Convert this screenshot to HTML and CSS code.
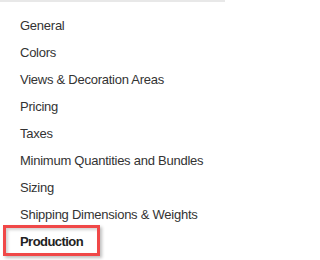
FILE: index.html
```html
<!DOCTYPE html>
<html>
<head>
<meta charset="utf-8">
<link rel="stylesheet" href="styles.css">
</head>
<body>
<ul class="menu">
  <li class="item">General</li>
  <li class="item">Colors</li>
  <li class="item">Views &amp; Decoration Areas</li>
  <li class="item">Pricing</li>
  <li class="item">Taxes</li>
  <li class="item">Minimum Quantities and Bundles</li>
  <li class="item">Sizing</li>
  <li class="item">Shipping Dimensions &amp; Weights</li>
  <li class="item active">Production<span class="mark"></span></li>
</ul>
</body>
</html>
```

FILE: styles.css
```css
html, body {
  margin: 0;
  padding: 0;
  background: #ffffff;
}
body {
  width: 225px;
  height: 260px;
  overflow: hidden;
  border-top: 2px solid #e8e8e8;
  box-sizing: border-box;
  font-family: "Liberation Sans", Arial, sans-serif;
  font-size: 13px;
  letter-spacing: -0.25px;
  color: #333333;
}
.menu {
  list-style: none;
  margin: 0;
  padding: 10px 0 0 0;
}
.item {
  line-height: 27px;
  height: 27px;
  padding-left: 20px;
  white-space: nowrap;
}
.active {
  position: relative;
  font-weight: bold;
  letter-spacing: -0.55px;
  color: #222;
}
.mark {
  position: absolute;
  left: 3px;
  top: -3px;
  width: 97px;
  height: 31px;
  box-sizing: border-box;
  border: 3px solid #f04848;
  box-shadow: 2px 2px 3px rgba(0,0,0,0.25), inset 2px 2px 3px rgba(0,0,0,0.18);
}
```
